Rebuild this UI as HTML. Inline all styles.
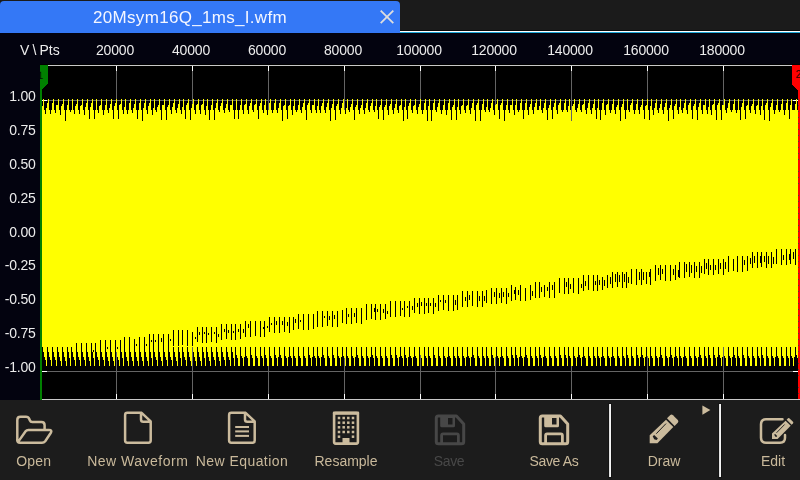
<!DOCTYPE html>
<html><head><meta charset="utf-8"><title>20Msym16Q_1ms_I.wfm</title>
<style>
html,body{margin:0;padding:0;}
body{width:800px;height:480px;overflow:hidden;background:#1c1c1c;position:relative;font-family:"Liberation Sans",sans-serif;}
#tabbar{position:absolute;left:0;top:0;width:800px;height:33px;background:#1b1b1b;}
#tab{position:absolute;left:0;top:1px;width:400px;height:32px;background:#3478f6;border-radius:4px 4px 0 0;color:#fff;}
#title{position:absolute;left:0;width:380px;top:7px;text-align:center;font-size:17px;letter-spacing:0.31px;line-height:20px;color:#f4f6ff;white-space:nowrap;}
#l1{position:absolute;left:400px;top:30px;width:400px;height:1px;background:#0a0a0a;}
#l2{position:absolute;left:400px;top:31px;width:400px;height:1px;background:#ffffff;}
#l3{position:absolute;left:400px;top:32px;width:400px;height:1px;background:#1fa8d8;}
#axes{position:absolute;left:0;top:33px;width:800px;height:367px;background:#03030f;}
#plot{position:absolute;left:0;top:0;}
.xl{position:absolute;top:41px;width:80px;text-align:center;font-size:14px;letter-spacing:-0.2px;line-height:18px;color:#ececec;}
.yl{position:absolute;left:0;width:35.7px;text-align:right;font-size:14px;letter-spacing:-0.2px;line-height:18px;color:#ececec;}
#vpts{position:absolute;left:19.5px;top:41px;font-size:14px;letter-spacing:-0.1px;word-spacing:-0.5px;line-height:18px;color:#ececec;white-space:nowrap;}
#tb{position:absolute;left:0;top:400px;width:800px;height:80px;background:#1c1c1c;}
.btn{position:absolute;top:0;height:80px;text-align:center;color:#c9b99b;font-size:14px;}
.btn span{position:absolute;left:-40px;right:-40px;top:52px;line-height:18px;white-space:nowrap;}
.btn svg{position:absolute;}
.dis{color:#484848;}
.xl,.yl,#vpts,#title,.btn span{will-change:transform;}
.sep{position:absolute;top:4px;width:2px;height:73px;background:linear-gradient(90deg,#d8d8d8,#ffffff);box-shadow:0 0 0 1px #141414;}
</style></head><body>
<div id="tabbar"><div id="tab"><div id="title">20Msym16Q_1ms_I.wfm</div>
<svg style="position:absolute;left:379px;top:8px" width="16" height="16" viewBox="0 0 16 16"><path d="M1.7 1.7L14.3 14.1M14.3 1.7L1.7 14.1" stroke="#dedede" stroke-width="1.8" fill="none"/></svg>
</div><div id="l1"></div><div id="l2"></div><div id="l3"></div></div>
<div id="axes"></div>
<div id="vpts">V \ Pts</div>
<div class="xl" style="left:75px">20000</div><div class="xl" style="left:151px">40000</div><div class="xl" style="left:227px">60000</div><div class="xl" style="left:303px">80000</div><div class="xl" style="left:379px">100000</div><div class="xl" style="left:454px">120000</div><div class="xl" style="left:530px">140000</div><div class="xl" style="left:606px">160000</div><div class="xl" style="left:682px">180000</div>
<div class="yl" style="top:87px">1.00</div><div class="yl" style="top:121px">0.75</div><div class="yl" style="top:155px">0.50</div><div class="yl" style="top:189px">0.25</div><div class="yl" style="top:223px">0.00</div><div class="yl" style="top:256px">-0.25</div><div class="yl" style="top:290px">-0.50</div><div class="yl" style="top:324px">-0.75</div><div class="yl" style="top:358px">-1.00</div>
<svg id="plot" width="800" height="400" viewBox="0 0 800 400" shape-rendering="crispEdges">
<rect x="40" y="64" width="760" height="336" fill="#000"/>
<rect x="40" y="65" width="760" height="1" fill="#c8c8c8"/>
<rect x="40" y="399" width="760" height="1" fill="#c8c8c8"/>
<rect x="116" y="66" width="1" height="333" fill="#646464"/><rect x="116" y="66" width="1" height="5" fill="#fff"/><rect x="116" y="394" width="1" height="5" fill="#fff"/><rect x="192" y="66" width="1" height="333" fill="#646464"/><rect x="192" y="66" width="1" height="5" fill="#fff"/><rect x="192" y="394" width="1" height="5" fill="#fff"/><rect x="268" y="66" width="1" height="333" fill="#646464"/><rect x="268" y="66" width="1" height="5" fill="#fff"/><rect x="268" y="394" width="1" height="5" fill="#fff"/><rect x="344" y="66" width="1" height="333" fill="#646464"/><rect x="344" y="66" width="1" height="5" fill="#fff"/><rect x="344" y="394" width="1" height="5" fill="#fff"/><rect x="420" y="66" width="1" height="333" fill="#646464"/><rect x="420" y="66" width="1" height="5" fill="#fff"/><rect x="420" y="394" width="1" height="5" fill="#fff"/><rect x="495" y="66" width="1" height="333" fill="#646464"/><rect x="495" y="66" width="1" height="5" fill="#fff"/><rect x="495" y="394" width="1" height="5" fill="#fff"/><rect x="571" y="66" width="1" height="333" fill="#646464"/><rect x="571" y="66" width="1" height="5" fill="#fff"/><rect x="571" y="394" width="1" height="5" fill="#fff"/><rect x="647" y="66" width="1" height="333" fill="#646464"/><rect x="647" y="66" width="1" height="5" fill="#fff"/><rect x="647" y="394" width="1" height="5" fill="#fff"/><rect x="723" y="66" width="1" height="333" fill="#646464"/><rect x="723" y="66" width="1" height="5" fill="#fff"/><rect x="723" y="394" width="1" height="5" fill="#fff"/><rect x="42" y="100" width="756" height="1" fill="#646464"/><rect x="42" y="100" width="5" height="1" fill="#fff"/><rect x="793" y="100" width="5" height="1" fill="#fff"/><rect x="42" y="134" width="756" height="1" fill="#646464"/><rect x="42" y="134" width="5" height="1" fill="#fff"/><rect x="793" y="134" width="5" height="1" fill="#fff"/><rect x="42" y="168" width="756" height="1" fill="#646464"/><rect x="42" y="168" width="5" height="1" fill="#fff"/><rect x="793" y="168" width="5" height="1" fill="#fff"/><rect x="42" y="202" width="756" height="1" fill="#646464"/><rect x="42" y="202" width="5" height="1" fill="#fff"/><rect x="793" y="202" width="5" height="1" fill="#fff"/><rect x="42" y="236" width="756" height="1" fill="#646464"/><rect x="42" y="236" width="5" height="1" fill="#fff"/><rect x="793" y="236" width="5" height="1" fill="#fff"/><rect x="42" y="269" width="756" height="1" fill="#646464"/><rect x="42" y="269" width="5" height="1" fill="#fff"/><rect x="793" y="269" width="5" height="1" fill="#fff"/><rect x="42" y="303" width="756" height="1" fill="#646464"/><rect x="42" y="303" width="5" height="1" fill="#fff"/><rect x="793" y="303" width="5" height="1" fill="#fff"/><rect x="42" y="337" width="756" height="1" fill="#646464"/><rect x="42" y="337" width="5" height="1" fill="#fff"/><rect x="793" y="337" width="5" height="1" fill="#fff"/><rect x="42" y="371" width="756" height="1" fill="#646464"/><rect x="42" y="371" width="5" height="1" fill="#fff"/><rect x="793" y="371" width="5" height="1" fill="#fff"/>
<path d="M42 106H43V99H44V110H45V114H46V108H47V103H48V99H49V110H50V114H51V110H52V103H53V99H54V110H55V113H56V105H58V99H59V110H60V115H61V106H62V104H63V99H64V110H65V121H66V110H67V105H68V99H69V110H70V112H71V110H72V99H73V110H74V114H75V106H76V104H77V99H78V110H79V114H80V106H81V105H82V99H83V110H84V115H85V107H86V103H87V99H88V110H89V119H90V107H91V103H92V99H93V110H94V119H95V110H96V99H97V110H98V113H99V106H100V105H101V99H102V110H103V115H104V110H105V105H106V99H107V110H108V113H109V108H110V104H111V99H112V110H113V119H114V106H115V103H116V99H117V110H118V119H119V105H120V104H121V99H122V110H123V114H124V107H125V99H126V110H127V114H128V110H129V103H130V99H131V110H132V113H133V108H134V104H135V99H136V110H137V119H138V110H139V103H140V99H141V110H142V121H143V108H144V103H145V99H146V110H147V114H148V106H149V103H150V99H151V110H152V115H153V108H154V99H155V110H156V112H157V107H158V105H159V99H160V110H161V120H162V105H164V99H165V110H166V120H167V107H168V105H169V99H170V110H171V114H172V107H173V103H174V99H175V110H176V113H177V108H178V104H179V99H180V110H181V114H182V107H183V99H184V110H185V119H186V105H187V103H188V99H189V110H190V120H191V108H192V104H193V99H194V110H195V114H196V105H197V104H198V99H199V110H200V114H201V105H202V104H203V99H204V110H205V115H206V106H207V99H208V110H209V120H210V110H211V105H212V99H213V110H214V120H215V108H216V103H217V99H218V110H219V112H220V106H221V103H222V99H223V110H224V113H225V108H226V104H227V99H228V110H229V112H230V105H232V99H233V110H234V119H235V110H236V99H237V110H238V119H239V110H240V105H241V99H242V110H243V114H244V105H245V104H246V99H247V110H248V114H249V106H250V103H251V99H252V110H253V112H254V105H255V104H256V99H257V110H258V119H259V106H260V103H261V99H262V110H263V113H264V105H265V99H266V110H267V115H268V110H269V103H270V99H271V110H272V113H273V110H274V103H275V99H276V110H277V113H278V108H279V103H280V99H281V110H282V121H283V106H284V105H285V99H286V110H287V119H288V106H289V105H290V99H291V110H292V115H293V106H294V99H295V110H296V112H297V110H298V105H299V99H300V110H301V113H302V107H303V103H304V99H305V110H306V120H307V105H308V103H309V99H310V110H311V113H312V105H314V99H315V110H316V113H317V106H318V99H319V110H320V113H321V106H322V103H323V99H324V110H325V113H326V107H327V103H328V99H329V110H330V121H331V108H332V104H333V99H334V110H335V120H336V106H337V104H338V99H339V110H340V114H341V108H342V103H343V99H344V110H345V114H346V108H347V99H348V110H349V112H350V107H351V104H352V99H353V110H354V120H355V107H356V105H357V99H358V110H359V114H360V108H361V105H362V99H363V110H364V114H365V108H366V103H367V99H368V110H369V112H370V106H371V103H372V99H373V110H374V112H375V106H376V99H377V110H378V119H379V107H380V105H381V99H382V110H383V120H384V107H385V105H386V99H387V110H388V115H389V106H390V104H391V99H392V110H393V114H394V108H395V104H396V99H397V110H398V113H399V106H400V105H401V99H402V110H403V121H404V107H405V99H406V110H407V119H408V106H409V103H410V99H411V110H412V113H413V106H414V105H415V99H416V110H417V114H418V107H419V104H420V99H421V110H422V114H423V110H424V103H425V99H426V110H427V121H428V106H429V99H430V110H431V121H432V110H433V103H434V99H435V110H436V112H437V107H438V103H439V99H440V110H441V114H442V110H443V105H444V99H445V110H446V115H447V110H448V103H449V99H450V110H451V120H452V107H453V105H454V99H455V110H456V120H457V107H458V99H459V110H460V114H461V106H462V105H463V99H464V110H465V113H466V106H467V105H468V99H469V110H470V114H471V108H472V103H473V99H474V110H475V121H476V105H477V103H478V99H479V110H480V121H481V110H482V104H483V99H484V110H485V112H486V107H487V99H488V110H489V112H490V108H491V103H492V99H493V110H494V115H495V105H496V104H497V99H498V110H499V119H500V105H501V103H502V99H503V110H504V121H505V110H506V105H507V99H508V110H509V113H510V105H512V99H513V110H514V115H515V105H516V99H517V110H518V112H519V110H520V103H521V99H522V110H523V119H524V110H525V103H526V99H527V110H528V115H529V107H530V104H531V99H532V110H533V114H534V107H535V103H536V99H537V110H539V106H540V99H541V110H542V113H543V108H544V103H545V99H546V110H547V120H548V108H549V105H550V99H551V110H552V119H553V107H554V103H555V99H556V110H557V114H558V105H559V103H560V99H561V110H562V112H563V110H564V103H565V99H566V110H567V112H568V106H569V99H570V110H571V121H572V106H573V104H574V99H575V110H576V112H577V108H578V104H579V99H580V110H581V112H582V105H583V104H584V99H585V110H586V114H587V108H588V103H589V99H590V110H591V114H592V108H593V104H594V99H595V110H596V119H597V108H598V99H599V110H600V120H601V110H602V103H603V99H604V110H605V115H606V105H607V104H608V99H609V110H610V113H611V110H612V104H613V99H614V110H615V114H616V107H617V105H618V99H619V110H620V121H621V107H622V104H623V99H624V110H625V119H626V110H627V99H628V110H629V112H630V105H631V103H632V99H633V110H634V114H635V110H636V104H637V99H638V110H639V114H640V107H641V105H642V99H643V110H644V119H645V106H646V105H647V99H648V110H649V120H650V106H651V99H652V110H653V115H654V108H655V103H656V99H657V110H658V113H659V108H660V104H661V99H662V110H663V114H664V107H665V103H666V99H667V110H668V121H669V108H670V105H671V99H672V110H673V119H674V106H675V104H676V99H677V110H678V114H679V107H680V99H681V110H682V113H683V108H684V103H685V99H686V110H687V114H688V105H689V103H690V99H691V110H692V119H693V106H694V104H695V99H696V110H697V120H698V107H699V103H700V99H701V110H702V114H703V105H705V99H706V110H707V114H708V107H709V99H710V110H711V115H712V105H713V104H714V99H715V110H716V120H717V105H718V103H719V99H720V110H721V120H722V105H724V99H725V110H726V113H727V108H728V103H729V99H730V110H731V112H732V110H733V104H734V99H735V110H736V113H737V110H738V99H739V110H740V120H741V107H742V103H743V99H744V110H745V119H746V106H747V105H748V99H749V110H750V113H751V106H752V104H753V99H754V110H755V114H756V106H757V105H758V99H759V110H760V115H761V106H762V99H763V110H764V120H765V105H766V103H767V99H768V110H769V121H770V107H771V103H772V99H773V110H774V114H775V110H776V105H777V99H778V110H779V112H780V110H781V104H782V99H783V110H784V115H785V110H786V103H787V99H788V110H789V119H790V105H791V99H792V110H795V104H796V99H797V110H798V358H797V355H796V347H795V357H794V366H793V358H792V356H791V347H790V366H789V358H788V356H787V347H786V366H784V358H783V356H782V347H781V366H779V358H778V356H777V347H776V357H775V366H774V358H773V356H772V347H771V366H769V358H768V356H767V347H766V366H764V358H763V355H762V347H761V366H760V358H759V356H758V347H757V366H755V358H754V356H753V347H752V366H750V358H749V356H748V347H747V366H745V358H744V355H743V347H742V366H740V358H739V356H738V347H737V366H736V358H735V355H734V347H733V357H732V366H731V358H730V356H729V347H728V366H726V358H725V356H724V347H723V357H722V366H721V358H720V355H719V347H718V357H717V366H716V358H715V355H714V347H713V366H711V358H710V355H709V347H708V366H707V358H706V356H705V347H704V366H702V358H701V355H700V347H699V357H698V366H697V358H696V356H695V347H694V366H692V358H691V356H690V347H689V366H687V358H686V356H685V347H684V357H683V366H682V358H681V356H680V347H679V366H678V358H677V356H676V347H675V357H674V366H673V358H672V355H671V347H670V357H669V366H668V358H667V356H666V347H665V366H663V358H662V355H661V347H660V357H659V366H658V358H657V356H656V347H655V366H653V358H652V356H651V347H650V366H649V358H648V356H647V347H646V357H645V366H644V358H643V355H642V347H641V357H640V366H639V358H638V355H637V347H636V366H634V358H633V356H632V347H631V366H629V358H628V355H627V347H626V366H625V358H624V356H623V347H622V366H620V358H619V356H618V347H617V366H615V358H614V356H613V347H612V357H611V366H610V358H609V356H608V347H607V366H605V358H604V356H603V347H602V357H601V366H600V358H599V356H598V347H597V366H596V358H595V356H594V347H593V366H591V358H590V356H589V347H588V366H586V358H585V356H584V347H583V357H582V366H581V358H580V355H579V347H578V357H577V366H576V358H575V356H574V347H573V366H571V358H570V356H569V347H568V366H567V358H566V355H565V347H564V366H562V358H561V355H560V347H559V366H557V358H556V356H555V347H554V366H552V358H551V356H550V347H549V366H547V358H546V356H545V347H544V357H543V366H542V358H541V355H540V347H539V366H538V358H537V356H536V347H535V366H533V358H532V356H531V347H530V366H528V358H527V355H526V347H525V357H524V366H523V358H522V356H521V347H520V357H519V366H518V358H517V355H516V347H515V366H514V358H513V355H512V347H511V366H509V358H508V356H507V347H506V366H504V358H503V356H502V347H501V357H500V366H499V358H498V356H497V347H496V357H495V366H494V358H493V355H492V347H491V366H489V358H488V356H487V347H486V366H485V358H484V356H483V347H482V366H480V358H479V356H478V347H477V366H475V358H474V355H473V347H472V357H471V366H470V358H469V356H468V347H467V357H466V366H465V358H464V356H463V347H462V366H460V358H459V356H458V347H457V366H456V358H455V356H454V347H453V366H451V358H450V356H449V347H448V357H447V366H446V358H445V356H444V347H443V366H441V358H440V356H439V347H438V366H436V358H435V355H434V347H433V366H431V358H430V356H429V347H428V366H427V358H426V356H425V347H424V366H422V358H421V355H420V347H419V366H417V358H416V356H415V347H414V357H413V366H412V358H411V356H410V347H409V357H408V366H407V358H406V355H405V347H404V366H403V358H402V356H401V347H400V357H399V366H398V358H397V355H396V347H395V366H393V358H392V355H391V347H390V366H388V358H387V356H386V347H385V366H383V358H382V356H381V347H380V366H378V358H377V356H376V347H375V366H374V358H373V355H372V347H371V357H370V366H369V358H368V356H367V347H366V366H364V358H363V356H362V347H361V366H359V358H358V355H357V347H356V357H355V366H354V358H353V356H352V347H351V366H349V358H348V356H347V347H346V366H345V358H344V356H343V347H342V357H341V366H340V358H339V356H338V347H337V366H335V358H334V355H333V347H332V366H330V358H329V356H328V347H327V366H325V358H324V355H323V347H322V357H321V366H320V358H319V356H318V347H317V366H316V358H315V356H314V347H313V357H312V366H311V358H310V355H309V347H308V366H306V358H305V356H304V347H303V366H301V358H300V356H299V347H298V366H296V358H295V356H294V347H293V366H292V358H291V356H290V347H289V357H288V366H287V358H286V356H285V347H284V366H282V358H281V355H280V347H279V357H278V366H277V358H276V355H275V347H274V366H272V358H271V356H270V347H269V366H267V358H266V355H265V347H264V366H263V358H262V356H261V347H260V366H258V358H257V356H256V347H255V366H253V358H252V355H251V347H250V366H248V358H247V356H246V347H245V357H244V366H243V358H242V356H241V347H240V366H238V358H237V355H236V347H235V366H234V358H233V352H232V347H231V366H230V360H229V357H228V352H227V347H226V366H225V360H224V357H223V352H222V347H221V366H220V361H219V357H218V352H217V347H216V366H215V360H214V357H213V352H212V347H211V366H210V361H209V357H208V352H207V347H206V366H205V358H204V352H203V347H202V366H201V361H200V357H199V352H198V347H197V366H196V361H195V357H194V352H193V347H192V366H191V361H190V357H189V352H188V347H187V366H186V360H185V357H184V352H183V347H182V366H181V358H180V352H179V347H178V366H177V361H176V357H175V352H174V347H173V366H172V360H171V357H170V352H169V347H168V366H167V360H166V357H165V352H164V347H163V366H162V361H161V357H160V352H159V347H158V366H157V360H156V357H155V352H154V347H153V366H152V358H151V352H150V347H149V366H148V361H147V357H146V352H145V347H144V366H143V361H142V357H141V352H140V347H139V366H138V361H137V357H136V352H135V347H134V366H133V361H132V357H131V352H130V347H129V366H128V361H127V357H126V352H125V347H124V366H123V358H122V352H121V347H120V366H119V360H118V357H117V352H116V347H115V366H114V361H113V357H112V352H111V347H110V366H109V361H108V357H107V352H106V347H105V366H104V360H103V357H102V352H101V347H100V366H99V360H98V357H97V352H96V347H95V366H94V358H93V352H92V347H91V366H90V361H89V357H88V352H87V347H86V366H85V360H84V357H83V352H82V347H81V366H80V360H79V357H78V352H77V347H76V366H75V360H74V357H73V352H72V347H71V366H70V358H69V352H68V347H67V366H66V361H65V357H64V352H63V347H62V366H61V361H60V357H59V352H58V347H57V366H56V360H55V357H54V352H53V347H52V366H51V360H50V357H49V352H48V347H47V366H46V360H45V357H44V352H43V347H42Z" fill="#ffff00"/><path d="M42 350h1V366h-1ZM47 350h1V366h-1ZM52 347h1V362h-1ZM57 347h1V363h-1ZM62 347h1V363h-1ZM67 347h1V362h-1ZM71 347h1V363h-1ZM76 343h1V359h-1ZM81 343h1V358h-1ZM86 343h1V359h-1ZM91 343h1V359h-1ZM93 350h1V352h-1ZM95 343h1V358h-1ZM100 340h1V356h-1ZM105 340h1V356h-1ZM107 347h1V349h-1ZM110 340h1V355h-1ZM115 340h1V356h-1ZM117 347h1V349h-1ZM120 340h1V356h-1ZM124 337h1V352h-1ZM129 337h1V353h-1ZM134 339h1V353h-1ZM136 344h1V346h-1ZM139 337h1V352h-1ZM144 337h1V353h-1ZM146 344h1V346h-1ZM149 334h1V350h-1ZM151 340h1V342h-1ZM153 334h1V349h-1ZM155 340h1V342h-1ZM158 334h1V350h-1ZM161 338h1V342h-1ZM163 334h1V350h-1ZM168 334h1V349h-1ZM170 339h1V341h-1ZM173 330h1V346h-1ZM178 330h1V346h-1ZM182 330h1V345h-1ZM187 330h1V346h-1ZM192 332h1V346h-1ZM195 337h1V339h-1ZM197 327h1V342h-1ZM199 332h1V335h-1ZM202 327h1V343h-1ZM204 332h1V334h-1ZM206 327h1V343h-1ZM208 333h1V335h-1ZM211 327h1V342h-1ZM214 332h1V334h-1ZM216 327h1V343h-1ZM218 334h1V337h-1ZM221 324h1V340h-1ZM224 329h1V332h-1ZM226 324h1V339h-1ZM228 330h1V333h-1ZM231 324h1V340h-1ZM233 331h1V333h-1ZM235 324h1V340h-1ZM238 329h1V332h-1ZM240 324h1V339h-1ZM243 329h1V333h-1ZM245 321h1V337h-1ZM248 324h1V328h-1ZM250 321h1V337h-1ZM255 321h1V336h-1ZM260 321h1V337h-1ZM263 327h1V329h-1ZM264 321h1V337h-1ZM267 326h1V328h-1ZM269 317h1V332h-1ZM271 323h1V325h-1ZM274 317h1V333h-1ZM276 321h1V325h-1ZM279 317h1V333h-1ZM282 321h1V325h-1ZM284 317h1V332h-1ZM287 322h1V326h-1ZM289 317h1V333h-1ZM293 317h1V330h-1ZM295 319h1V323h-1ZM298 314h1V329h-1ZM300 320h1V322h-1ZM303 314h1V330h-1ZM308 314h1V330h-1ZM313 314h1V329h-1ZM317 311h1V327h-1ZM322 311h1V327h-1ZM324 316h1V318h-1ZM327 311h1V326h-1ZM329 316h1V320h-1ZM332 311h1V327h-1ZM334 315h1V319h-1ZM337 311h1V327h-1ZM342 310h1V323h-1ZM346 308h1V324h-1ZM348 314h1V317h-1ZM351 308h1V324h-1ZM354 313h1V317h-1ZM356 308h1V323h-1ZM361 308h1V324h-1ZM366 304h1V320h-1ZM371 304h1V319h-1ZM374 308h1V312h-1ZM375 304h1V320h-1ZM377 309h1V312h-1ZM380 304h1V320h-1ZM383 309h1V313h-1ZM385 304h1V319h-1ZM387 311h1V314h-1ZM390 301h1V317h-1ZM395 301h1V317h-1ZM400 301h1V316h-1ZM402 308h1V310h-1ZM404 301h1V317h-1ZM407 306h1V308h-1ZM409 301h1V317h-1ZM412 306h1V310h-1ZM414 298h1V313h-1ZM417 303h1V307h-1ZM419 298h1V314h-1ZM421 302h1V306h-1ZM424 298h1V314h-1ZM426 303h1V306h-1ZM428 298h1V313h-1ZM430 303h1V306h-1ZM433 298h1V314h-1ZM435 303h1V307h-1ZM438 295h1V311h-1ZM440 300h1V302h-1ZM443 295h1V310h-1ZM445 300h1V303h-1ZM448 295h1V311h-1ZM453 295h1V311h-1ZM455 300h1V305h-1ZM457 295h1V310h-1ZM462 291h1V307h-1ZM465 297h1V301h-1ZM467 291h1V307h-1ZM469 295h1V300h-1ZM472 291h1V306h-1ZM477 291h1V307h-1ZM479 296h1V301h-1ZM482 291h1V307h-1ZM484 296h1V301h-1ZM486 290h1V303h-1ZM491 288h1V304h-1ZM494 292h1V297h-1ZM496 288h1V304h-1ZM499 293h1V298h-1ZM501 288h1V303h-1ZM503 292h1V297h-1ZM506 288h1V304h-1ZM508 293h1V297h-1ZM511 285h1V301h-1ZM514 290h1V294h-1ZM515 287h1V300h-1ZM518 290h1V295h-1ZM520 285h1V301h-1ZM525 288h1V301h-1ZM530 285h1V300h-1ZM532 291h1V296h-1ZM535 282h1V298h-1ZM539 282h1V298h-1ZM541 287h1V292h-1ZM544 285h1V297h-1ZM547 287h1V291h-1ZM549 282h1V298h-1ZM552 285h1V290h-1ZM554 282h1V298h-1ZM559 278h1V293h-1ZM564 278h1V294h-1ZM566 282h1V287h-1ZM568 278h1V294h-1ZM570 284h1V289h-1ZM573 278h1V293h-1ZM578 278h1V294h-1ZM581 284h1V288h-1ZM583 275h1V291h-1ZM585 281h1V286h-1ZM588 275h1V290h-1ZM593 275h1V291h-1ZM595 281h1V285h-1ZM597 275h1V291h-1ZM599 280h1V285h-1ZM602 277h1V290h-1ZM604 280h1V286h-1ZM607 275h1V288h-1ZM610 277h1V284h-1ZM612 272h1V288h-1ZM615 274h1V282h-1ZM617 272h1V287h-1ZM619 275h1V282h-1ZM622 272h1V288h-1ZM624 274h1V282h-1ZM626 272h1V288h-1ZM628 277h1V283h-1ZM631 269h1V284h-1ZM636 269h1V285h-1ZM639 272h1V280h-1ZM641 269h1V285h-1ZM643 272h1V280h-1ZM646 272h1V284h-1ZM649 272h1V277h-1ZM650 269h1V285h-1ZM655 265h1V281h-1ZM658 268h1V275h-1ZM660 265h1V280h-1ZM662 269h1V274h-1ZM665 265h1V281h-1ZM670 265h1V281h-1ZM673 269h1V275h-1ZM675 265h1V280h-1ZM678 270h1V277h-1ZM679 262h1V278h-1ZM684 262h1V278h-1ZM686 264h1V272h-1ZM689 262h1V277h-1ZM691 265h1V273h-1ZM694 262h1V278h-1ZM696 266h1V272h-1ZM699 262h1V278h-1ZM701 266h1V273h-1ZM704 259h1V274h-1ZM706 263h1V269h-1ZM708 259h1V275h-1ZM710 265h1V270h-1ZM713 259h1V275h-1ZM715 265h1V270h-1ZM718 259h1V274h-1ZM720 263h1V269h-1ZM723 259h1V275h-1ZM725 262h1V269h-1ZM728 256h1V272h-1ZM733 259h1V271h-1ZM737 256h1V272h-1ZM742 256h1V272h-1ZM744 260h1V265h-1ZM747 256h1V271h-1ZM750 258h1V264h-1ZM752 252h1V268h-1ZM754 256h1V263h-1ZM757 252h1V268h-1ZM760 256h1V263h-1ZM761 252h1V267h-1ZM764 256h1V262h-1ZM766 252h1V268h-1ZM768 256h1V264h-1ZM771 252h1V268h-1ZM773 257h1V264h-1ZM776 249h1V264h-1ZM781 249h1V265h-1ZM783 255h1V260h-1ZM786 249h1V265h-1ZM789 254h1V260h-1ZM790 249h1V264h-1ZM793 252h1V259h-1ZM795 249h1V265h-1Z" fill="#000"/>
<rect x="40" y="65" width="2" height="335" fill="#008000"/>
<path d="M40 65H48V83.5L42 90H40Z" fill="#008000"/>
<clipPath id="cp"><rect x="40" y="60" width="20" height="40"/></clipPath>
<text x="40.3" y="78.8" text-anchor="middle" font-size="10.5" fill="#001800" clip-path="url(#cp)" font-family="Liberation Sans, sans-serif" style="text-rendering:geometricPrecision">1</text>
<rect x="798" y="65" width="2" height="334" fill="#ff0000"/>
<rect x="798" y="99" width="1" height="1" fill="#50403c"/><rect x="798" y="105" width="1" height="1" fill="#50403c"/><rect x="798" y="111" width="1" height="1" fill="#50403c"/><rect x="798" y="117" width="1" height="1" fill="#50403c"/><rect x="798" y="123" width="1" height="1" fill="#50403c"/><rect x="798" y="129" width="1" height="1" fill="#50403c"/><rect x="798" y="135" width="1" height="1" fill="#50403c"/><rect x="798" y="141" width="1" height="1" fill="#50403c"/><rect x="798" y="147" width="1" height="1" fill="#50403c"/><rect x="798" y="153" width="1" height="1" fill="#50403c"/><rect x="798" y="159" width="1" height="1" fill="#50403c"/><rect x="798" y="171" width="1" height="1" fill="#50403c"/><rect x="798" y="177" width="1" height="1" fill="#50403c"/><rect x="798" y="183" width="1" height="1" fill="#50403c"/><rect x="798" y="195" width="1" height="1" fill="#50403c"/><rect x="798" y="201" width="1" height="1" fill="#50403c"/><rect x="798" y="207" width="1" height="1" fill="#50403c"/><rect x="798" y="213" width="1" height="1" fill="#50403c"/><rect x="798" y="219" width="1" height="1" fill="#50403c"/><rect x="798" y="225" width="1" height="1" fill="#50403c"/><rect x="798" y="231" width="1" height="1" fill="#50403c"/><rect x="798" y="237" width="1" height="1" fill="#50403c"/><rect x="798" y="243" width="1" height="1" fill="#50403c"/><rect x="798" y="249" width="1" height="1" fill="#50403c"/><rect x="798" y="255" width="1" height="1" fill="#50403c"/><rect x="798" y="261" width="1" height="1" fill="#50403c"/><rect x="798" y="267" width="1" height="1" fill="#50403c"/><rect x="798" y="273" width="1" height="1" fill="#50403c"/><rect x="798" y="279" width="1" height="1" fill="#50403c"/><rect x="798" y="285" width="1" height="1" fill="#50403c"/><rect x="798" y="291" width="1" height="1" fill="#50403c"/><rect x="798" y="297" width="1" height="1" fill="#50403c"/><rect x="798" y="303" width="1" height="1" fill="#50403c"/><rect x="798" y="309" width="1" height="1" fill="#50403c"/><rect x="798" y="315" width="1" height="1" fill="#50403c"/><rect x="798" y="321" width="1" height="1" fill="#50403c"/><rect x="798" y="327" width="1" height="1" fill="#50403c"/><rect x="798" y="333" width="1" height="1" fill="#50403c"/><rect x="798" y="339" width="1" height="1" fill="#50403c"/><rect x="798" y="345" width="1" height="1" fill="#50403c"/><rect x="798" y="351" width="1" height="1" fill="#50403c"/><rect x="798" y="357" width="1" height="1" fill="#50403c"/><rect x="798" y="363" width="1" height="1" fill="#50403c"/><rect x="798" y="369" width="1" height="1" fill="#50403c"/><rect x="798" y="375" width="1" height="1" fill="#50403c"/><rect x="798" y="387" width="1" height="1" fill="#50403c"/><rect x="798" y="393" width="1" height="1" fill="#50403c"/>
<path d="M800 65H792V84.5L798 90H800Z" fill="#ff0000"/>
<text x="795.4" y="78.4" font-size="10.5" fill="#300000" font-family="Liberation Sans, sans-serif">2</text>
</svg>
<div id="tb">
<svg id="icons" width="800" height="80" viewBox="0 0 800 80" style="position:absolute;left:0;top:0"><path d="M44.6 29.5V25.2Q44.6 22.1 41.5 22.1H32.2Q30.5 22.1 29.8 20.3L29.3 19Q28.4 16.8 26 16.8H20.5Q17.3 16.8 17.3 20V40" fill="none" stroke="#cbbb9d" stroke-width="2.5" stroke-linecap="round" stroke-linejoin="round"/><path d="M18.3 41.6L25.6 31.3Q26.6 30 28.4 30H49Q52.6 30 50.7 33L45.2 41.2Q44 42.8 42 42.8H20Q17.3 42.8 17.3 40" fill="none" stroke="#cbbb9d" stroke-width="2.5" stroke-linecap="round" stroke-linejoin="round"/><path d="M141.0 12.8H127.3Q125.1 12.8 125.1 15.0V40.5Q125.1 42.7 127.3 42.7H148.5Q150.7 42.7 150.7 40.5V21.4L141.6 12.8M141.0 12.8V19.5Q141.0 21.8 143.3 21.8H150.7" fill="none" stroke="#cbbb9d" stroke-width="2.5" stroke-linejoin="round" stroke-linecap="round"/><path d="M245.0 12.8H231.3Q229.10000000000002 12.8 229.10000000000002 15.0V40.5Q229.10000000000002 42.7 231.3 42.7H252.50000000000003Q254.70000000000002 42.7 254.70000000000002 40.5V21.4L245.6 12.8M245.0 12.8V19.5Q245.0 21.8 247.3 21.8H254.70000000000002" fill="none" stroke="#cbbb9d" stroke-width="2.5" stroke-linejoin="round" stroke-linecap="round"/><rect x="235.20000000000002" y="26" width="13.8" height="2" fill="#cbbb9d"/><rect x="235.20000000000002" y="30.4" width="13.8" height="2" fill="#cbbb9d"/><rect x="235.20000000000002" y="34.9" width="13.8" height="2" fill="#cbbb9d"/><rect x="334.1" y="13" width="23.8" height="30.6" rx="1.5" fill="none" stroke="#cbbb9d" stroke-width="2.6"/><rect x="332.8" y="11.6" width="26.4" height="3.2" rx="1.2" fill="#cbbb9d"/><rect x="337.75" y="16.75" width="2.5" height="2.5" fill="#cbbb9d"/><rect x="342.45" y="16.75" width="2.5" height="2.5" fill="#cbbb9d"/><rect x="347.05" y="16.75" width="2.5" height="2.5" fill="#cbbb9d"/><rect x="351.75" y="16.75" width="2.5" height="2.5" fill="#cbbb9d"/><rect x="337.75" y="21.45" width="2.5" height="2.5" fill="#cbbb9d"/><rect x="342.45" y="21.45" width="2.5" height="2.5" fill="#cbbb9d"/><rect x="347.05" y="21.45" width="2.5" height="2.5" fill="#cbbb9d"/><rect x="351.75" y="21.45" width="2.5" height="2.5" fill="#cbbb9d"/><rect x="337.75" y="26.05" width="2.5" height="2.5" fill="#cbbb9d"/><rect x="342.45" y="26.05" width="2.5" height="2.5" fill="#cbbb9d"/><rect x="347.05" y="26.05" width="2.5" height="2.5" fill="#cbbb9d"/><rect x="351.75" y="26.05" width="2.5" height="2.5" fill="#cbbb9d"/><rect x="337.75" y="30.75" width="2.5" height="2.5" fill="#cbbb9d"/><rect x="342.45" y="30.75" width="2.5" height="2.5" fill="#cbbb9d"/><rect x="347.05" y="30.75" width="2.5" height="2.5" fill="#cbbb9d"/><rect x="351.75" y="30.75" width="2.5" height="2.5" fill="#cbbb9d"/><rect x="337.75" y="35.45" width="2.5" height="2.5" fill="#cbbb9d"/><rect x="351.75" y="35.45" width="2.5" height="2.5" fill="#cbbb9d"/><rect x="342.5" y="38" width="7" height="6.5" fill="#cbbb9d"/><path d="M438.3 16.0H456.40000000000003L463.7 24.0V41.7Q463.7 43.7 461.7 43.7H438.3Q436.3 43.7 436.3 41.7V18.0Q436.3 16.0 438.3 16.0Z" fill="none" stroke="#474747" stroke-width="3" stroke-linejoin="round"/><path d="M440.2 15.5H455.0V25.8Q455.0 27.3 453.5 27.3H441.7Q440.2 27.3 440.2 25.8Z M448.0 18H452.5V24.5H448.0Z" fill="#474747" fill-rule="evenodd"/><path d="M441.6 44V35.4Q441.6 33.9 443.1 33.9H456.90000000000003Q458.40000000000003 33.9 458.40000000000003 35.4V44" fill="none" stroke="#474747" stroke-width="2.8"/><path d="M542.3 16.0H560.4L567.6999999999999 24.0V41.7Q567.6999999999999 43.7 565.6999999999999 43.7H542.3Q540.3 43.7 540.3 41.7V18.0Q540.3 16.0 542.3 16.0Z" fill="none" stroke="#cbbb9d" stroke-width="3" stroke-linejoin="round"/><path d="M544.1999999999999 15.5H559.0V25.8Q559.0 27.3 557.5 27.3H545.6999999999999Q544.1999999999999 27.3 544.1999999999999 25.8Z M552.0 18H556.5V24.5H552.0Z" fill="#cbbb9d" fill-rule="evenodd"/><path d="M545.5999999999999 44V35.4Q545.5999999999999 33.9 547.0999999999999 33.9H560.9Q562.4 33.9 562.4 35.4V44" fill="none" stroke="#cbbb9d" stroke-width="2.8"/><path d="M666 419.8L673.3 427L657.4 443.2H649.7V435.3Z" fill="#cbbb9d" transform="translate(0,-400)"/><path d="M667 418.3L670.3 415.1Q671.6 413.9 673 415.2L677.8 420Q679 421.4 677.8 422.7L674.6 425.9Z" fill="#cbbb9d" transform="translate(0,-400)"/><path d="M656.3 433.7L666 423.6" stroke="#1c1c1c" stroke-width="1" fill="none" transform="translate(0,-400)"/><path d="M652.7 436.3L654.2 435.1L657.9 438.6L656.6 440.1L654.2 439.3Z" fill="#1c1c1c" transform="translate(0,-400)"/><path d="M702.4 5.6L710.4 10.1L702.4 14.7Z" fill="#cbbb9d"/><path d="M782.5 419.3H766Q761 419.3 761 424.3V437.7Q761 442.7 766 442.7H780Q785 442.7 785 437.7V435" fill="none" stroke="#cbbb9d" stroke-width="2.5" stroke-linecap="round" transform="translate(0,-400)"/><path d="M785.6 420.7L790.7 425.8L777.6 439.1H772V433.6Z" fill="#cbbb9d" transform="translate(0,-400)"/><path d="M786.6 419.7L788 418.3Q788.8 417.6 789.6 418.4L793 421.8Q793.7 422.6 793 423.4L791.6 424.8Z" fill="#cbbb9d" transform="translate(0,-400)"/><path d="M776.5 432.8L784.6 424.5" stroke="#1c1c1c" stroke-width="0.9" fill="none" transform="translate(0,-400)"/><path d="M774.2 434.6L775.2 433.9L777.2 435.9L776.4 436.9L775.2 436.4Z" fill="#1c1c1c" transform="translate(0,-400)"/></svg>
<div class="btn" style="left:13px;width:40px"><span style="letter-spacing:0.2px;margin-left:0.6px">Open</span></div>
<div class="btn" style="left:117px;width:40px"><span style="letter-spacing:0.5px;margin-left:0.5px">New Waveform</span></div>
<div class="btn" style="left:222px;width:40px"><span style="letter-spacing:0.43px">New Equation</span></div>
<div class="btn" style="left:326px;width:40px"><span>Resample</span></div>
<div class="btn dis" style="left:429px;width:40px"><span style="letter-spacing:-0.4px">Save</span></div>
<div class="btn" style="left:534px;width:40px"><span style="letter-spacing:-0.35px">Save As</span></div>
<div class="sep" style="left:609px"></div>
<div class="btn" style="left:644px;width:40px"><span>Draw</span></div>
<div class="sep" style="left:719px"></div>
<div class="btn" style="left:753.3px;width:40px"><span>Edit</span></div>
</div>
</body></html>
